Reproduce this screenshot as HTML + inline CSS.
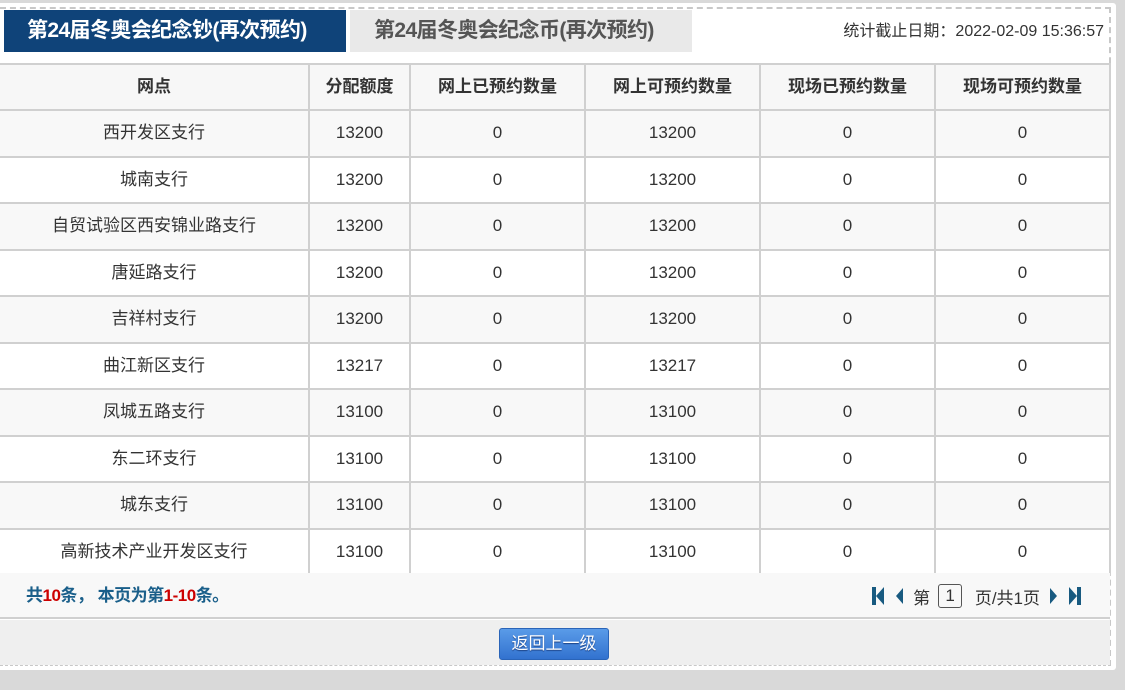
<!DOCTYPE html>
<html><head><meta charset="utf-8"><style>
*{margin:0;padding:0;box-sizing:border-box}
body{width:1125px;height:690px;background:#d9d9d9;position:relative;overflow:hidden;font-family:"Liberation Sans","Noto Sans CJK SC",sans-serif;color:#333}
.panel{position:absolute;left:0;top:3px;width:1116px;height:667px;background:#fff;border-radius:0 3px 3px 0}
.dash{position:absolute;left:0;top:7px;width:1111px;height:659px;border-top:2px dashed #c8c8c8;border-right:2px dashed #c8c8c8;border-bottom:1px dashed #c8c8c8}
.tab1{position:absolute;left:4px;top:10px;width:342px;height:42px;background:#0f4379;color:#fff;font-weight:bold;font-size:21px;line-height:42px;padding-left:23px;white-space:nowrap;letter-spacing:-0.6px}
.tab2{position:absolute;left:350px;top:10px;width:342px;height:42px;background:#e9e9e9;color:#555;font-weight:bold;font-size:21px;line-height:42px;padding-left:24px;white-space:nowrap;letter-spacing:-0.6px}
.date{position:absolute;right:21px;top:21px;font-size:16px;line-height:22px;color:#333}
table{position:absolute;left:0;top:63px;width:1110px;border-collapse:collapse;font-size:17px;table-layout:fixed}
td,th{border:2px solid #d0d0d0;text-align:center;height:46.5px;font-weight:normal;line-height:20px;padding:0;vertical-align:middle}
th{font-weight:bold;background:#f7f7f7;color:#333;height:46px}
tr td:first-child,tr th:first-child{border-left:none}
tr:nth-child(even) td{background:#f8f8f8}
tr:nth-child(odd) td{background:#fff}
.foot{position:absolute;left:0;top:573px;width:1110px;height:46px;background:#f8f8f8;border-bottom:2px solid #d0d0d0}
.cnt{position:absolute;left:26px;top:12px;font-size:17px;line-height:22px;font-weight:bold;color:#1a5f8a;letter-spacing:-0.5px}
.cnt b{color:#c00}
.pg{position:absolute;right:28px;top:10px;height:26px;font-size:17px;color:#333;display:flex;align-items:center;gap:8px}
.box{display:inline-block;border:1px solid #555;border-radius:3px;width:24px;height:24px;text-align:center;line-height:22px}
.gray{position:absolute;left:0;top:620px;width:1110px;height:45px;background:#efefef}
.btn{position:absolute;left:499px;top:628px;width:110px;height:32px;border:1px solid #2a64b8;border-radius:3px;background:linear-gradient(#5a9be8,#3272cf);color:#fff;font-size:17px;text-align:center;line-height:30px;text-shadow:0 1px 1px #1a3f80}
</style></head><body>
<div class="panel"></div>
<div class="dash"></div>
<div class="tab1">第24届冬奥会纪念钞(再次预约)</div>
<div class="tab2">第24届冬奥会纪念币(再次预约)</div>
<div class="date">统计截止日期：2022-02-09 15:36:57</div>
<table>
<colgroup><col style="width:309px"><col style="width:101px"><col style="width:175px"><col style="width:175px"><col style="width:175px"><col style="width:175px"></colgroup>
<tr><th>网点</th><th>分配额度</th><th>网上已预约数量</th><th>网上可预约数量</th><th>现场已预约数量</th><th>现场可预约数量</th></tr>
<tr><td>西开发区支行</td><td>13200</td><td>0</td><td>13200</td><td>0</td><td>0</td></tr>
<tr><td>城南支行</td><td>13200</td><td>0</td><td>13200</td><td>0</td><td>0</td></tr>
<tr><td>自贸试验区西安锦业路支行</td><td>13200</td><td>0</td><td>13200</td><td>0</td><td>0</td></tr>
<tr><td>唐延路支行</td><td>13200</td><td>0</td><td>13200</td><td>0</td><td>0</td></tr>
<tr><td>吉祥村支行</td><td>13200</td><td>0</td><td>13200</td><td>0</td><td>0</td></tr>
<tr><td>曲江新区支行</td><td>13217</td><td>0</td><td>13217</td><td>0</td><td>0</td></tr>
<tr><td>凤城五路支行</td><td>13100</td><td>0</td><td>13100</td><td>0</td><td>0</td></tr>
<tr><td>东二环支行</td><td>13100</td><td>0</td><td>13100</td><td>0</td><td>0</td></tr>
<tr><td>城东支行</td><td>13100</td><td>0</td><td>13100</td><td>0</td><td>0</td></tr>
<tr><td>高新技术产业开发区支行</td><td>13100</td><td>0</td><td>13100</td><td>0</td><td>0</td></tr>
</table>
<div class="foot">
<div class="cnt">共<b>10</b>条， 本页为第<b>1-10</b>条。</div>
<div class="pg">
<svg width="14" height="20" viewBox="0 0 14 20"><rect x="1" y="1" width="4" height="18" fill="#185a80"/><path d="M13 1 L5 10 L13 19Z" fill="#185a80"/></svg>
<svg width="12" height="20" viewBox="0 0 12 20"><path d="M10 2 L3 10 L10 18Z" fill="#185a80"/></svg>
<span>第</span><span class="box">1</span><span>&nbsp;页/共1页</span>
<svg width="12" height="20" viewBox="0 0 12 20"><path d="M2 2 L9 10 L2 18Z" fill="#185a80"/></svg>
<svg width="14" height="20" viewBox="0 0 14 20"><path d="M1 1 L9 10 L1 19Z" fill="#185a80"/><rect x="9" y="1" width="4" height="18" fill="#185a80"/></svg>
</div>
</div>
<div class="gray"></div>
<div class="btn">返回上一级</div>
</body></html>
